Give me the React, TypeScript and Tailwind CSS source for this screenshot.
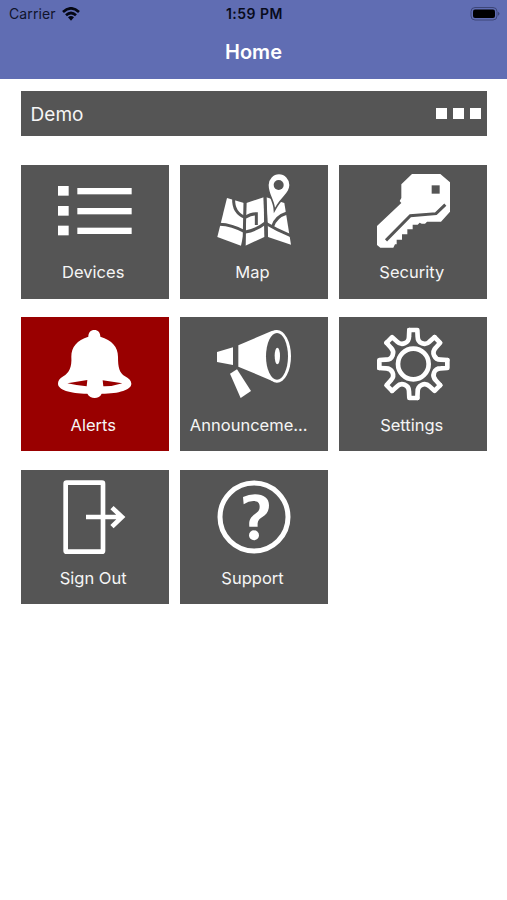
import type { ReactNode } from "react";

type Tile = {
  label: string;
  icon: ReactNode;
  alert?: boolean;
  long?: boolean;
};

function Icon({ viewBox, children }: { viewBox: string; children: ReactNode }) {
  return (
    <svg
      viewBox={viewBox}
      fill="#fff"
      className="h-[74px] w-[74px] shrink-0"
      aria-hidden="true"
    >
      {children}
    </svg>
  );
}

function DevicesIcon() {
  return (
    <Icon viewBox="129 43 222 222">
      {[79, 139, 198].map((y) => (
        <g key={y}>
          <rect x="128" y={y} width="33" height="29" />
          <rect x="187" y={y + 6} width="163" height="19" />
        </g>
      ))}
    </Icon>
  );
}

function MapIcon() {
  return (
    <Icon viewBox="126 43 222 222">
      <path d="M156 115L207 130L208 212L198 258L127 232Z" />
      <path d="M214 130L266 113L268 232L211 258Z" />
      <path d="M274 113L328 130L348 255L279 232Z" />
      <g fill="none" stroke="#555" strokeWidth="9">
        <path d="M134 194Q170 195 211 217Q243 212 271 190Q305 211 347 228" />
        <path d="M176 116Q174 160 211 173" />
        <path d="M211 173Q226 162 244 162L244 196" />
        <path d="M292 202Q301 171 336 160" />
        <path d="M210 126L207 262M270 108L275 240" />
      </g>
      <path
        d="M300 144C298 122 281 101 281 76A31 32 0 0 1 343 76C343 99 316 115 300 144Z"
        stroke="#555"
        strokeWidth="10"
        paintOrder="stroke"
      />
      <circle cx="311" cy="76" r="15" fill="#555" />
    </Icon>
  );
}

function KeyIcon() {
  return (
    <Icon viewBox="123 42 222 222">
      <path d="M231 42H316L345 67V155L318 185H276L270 191H260L254 188L248 194H233V208H217V223H201V239H185V253H180L175 263H136L126 255V198L199 129L194 123L199 114V73Z" />
      <rect x="290" y="76" width="24" height="25" fill="#555" />
      <path
        d="M153 241L226 167L303 161L331 134"
        fill="none"
        stroke="#555"
        strokeWidth="9"
      />
    </Icon>
  );
}

function BellIcon() {
  return (
    <Icon viewBox="130 44 222 222">
      <path
        fillRule="evenodd"
        d="M239 53C250 53 257 61 257 73C292 83 310 104 310 133C310 166 314 181 331 192C344 199 350 206 350 214C350 232 314 244 261 244C257 253 249 257 240 257C231 257 223 253 218 244C165 243 130 232 130 214C130 206 134 199 146 192C163 181 172 166 170 133C170 104 187 83 221 73C221 61 228 53 239 53ZM158 213L218 203L216 222Q184 219 158 213ZM264 204L323 213Q292 223 266 222Z"
      />
    </Icon>
  );
}

function MegaphoneIcon() {
  return (
    <Icon viewBox="126 44 222 222">
      <path d="M126 119L174 105V158L126 149Z" />
      <path d="M190 99L290 56L306 53L306 210L290 205L190 163Z" />
      <ellipse cx="306" cy="132" rx="42" ry="79" />
      <ellipse cx="306" cy="132" rx="33" ry="70" fill="#555" />
      <ellipse cx="307" cy="131" rx="8" ry="25" />
      <path d="M165 184L186 171L228 236L197 257Z" />
    </Icon>
  );
}

function GearIcon() {
  return (
    <Icon viewBox="-112 -111 222 222">
      <g
        fill="none"
        stroke="#fff"
        strokeWidth="14"
        strokeLinecap="round"
        strokeLinejoin="round"
      >
        {[0, 45, 90, 135, 180, 225, 270, 315].map((angle) => (
          <path
            key={angle}
            transform={`rotate(${angle})`}
            d="M-12 -102H12L13 -82C13 -62 36 -54 48.8 -67.2L63.6 -80.6"
          />
        ))}
        <circle r="46" />
      </g>
    </Icon>
  );
}

function SignOutIcon() {
  return (
    <Icon viewBox="129 43 222 222">
      <g fill="none" stroke="#fff" strokeWidth="14">
        <rect x="152" y="51" width="112" height="207" rx="3" />
        <path d="M213 154H322M291 126L321 154L291 183" />
      </g>
    </Icon>
  );
}

function SupportIcon() {
  return (
    <Icon viewBox="126 43 222 222">
      <circle cx="237" cy="154" r="102" fill="none" stroke="#fff" strokeWidth="15" />
      <path d="M204 94Q221 86 240 86C267 86 282 98 282 119C282 137 274 147 261 155C250 162 247 168 248 183H223C221 164 226 155 240 145C250 138 254 133 254 123C254 111 247 106 235 106Q221 106 206 116Z" />
      <circle cx="237" cy="209" r="15" />
    </Icon>
  );
}

const tiles: Tile[] = [
  { label: "Devices", icon: <DevicesIcon /> },
  { label: "Map", icon: <MapIcon /> },
  { label: "Security", icon: <KeyIcon /> },
  { label: "Alerts", icon: <BellIcon />, alert: true },
  { label: "Announceme...", icon: <MegaphoneIcon />, long: true },
  { label: "Settings", icon: <GearIcon /> },
  { label: "Sign Out", icon: <SignOutIcon /> },
  { label: "Support", icon: <SupportIcon /> },
];

function StatusBar() {
  return (
    <div className="grid h-[27px] grid-cols-3 items-center pr-[7px] pl-[9px] text-[14px] text-[#10142b]">
      <div className="flex items-center gap-[6px]">
        <span className="tracking-[0.1px]">Carrier</span>
        <svg viewBox="0 0 54 42" className="h-[14px] w-[18px]" aria-hidden="true">
          <g fill="none" stroke="#050713" strokeWidth="8">
            <path d="M3 15Q27 -7 51 15" />
            <path d="M12 25Q27 11 42 25" />
          </g>
          <path d="M18 31Q27 23 36 31L27 41Z" fill="#050713" />
        </svg>
      </div>
      <span className="text-center font-semibold tracking-[0.5px] whitespace-nowrap text-[#080b1c]">
        1:59 PM
      </span>
      <svg
        viewBox="0 0 30 14"
        className="h-[14px] w-[30px] justify-self-end"
        aria-hidden="true"
      >
        <rect x="1" y="0.5" width="26" height="12.5" rx="4" fill="none" stroke="#3d4678" />
        <rect x="3" y="2.5" width="22" height="8.5" rx="2" fill="#000" />
        <path d="M28 4.8Q31 6.7 28 8.7Z" fill="#3d4678" />
      </svg>
    </div>
  );
}

export default function App() {
  return (
    <div className="min-h-[900px] w-full bg-white font-['Inter','Liberation_Sans',sans-serif]">
      <header className="h-[79px] bg-[#606db3]">
        <StatusBar />
        <h1 className="flex h-[50px] items-center justify-center text-[20px] font-semibold text-white">
          Home
        </h1>
      </header>

      <main className="pt-[12px] pr-[19.6px] pl-[20.6px]">
        <div className="flex h-[45px] items-center justify-between bg-[#555] pr-[6px] pl-[10px]">
          <span className="pt-[3px] text-[19px] text-[#f5f5f5]">Demo</span>
          <div className="flex gap-[6.3px]">
            <span className="h-[11px] w-[11px] bg-white" />
            <span className="h-[11px] w-[11px] bg-white" />
            <span className="h-[11px] w-[11px] bg-white" />
          </div>
        </div>

        <div className="mt-[28.7px] grid grid-cols-3 gap-x-[11px] gap-y-[18.7px]">
          {tiles.map((tile) => (
            <button
              key={tile.label}
              className={`flex h-[134px] min-w-0 flex-col items-center px-[10px] pt-[9.5px] ${
                tile.alert ? "bg-[#990000]" : "bg-[#555]"
              }`}
            >
              {tile.icon}
              <span
                className={`mt-[12px] w-full pr-[3px] text-[16.5px] leading-[24px] whitespace-nowrap text-[#f5f5f5] ${
                  tile.long ? "text-left" : "text-center"
                }`}
              >
                {tile.label}
              </span>
            </button>
          ))}
        </div>
      </main>
    </div>
  );
}
